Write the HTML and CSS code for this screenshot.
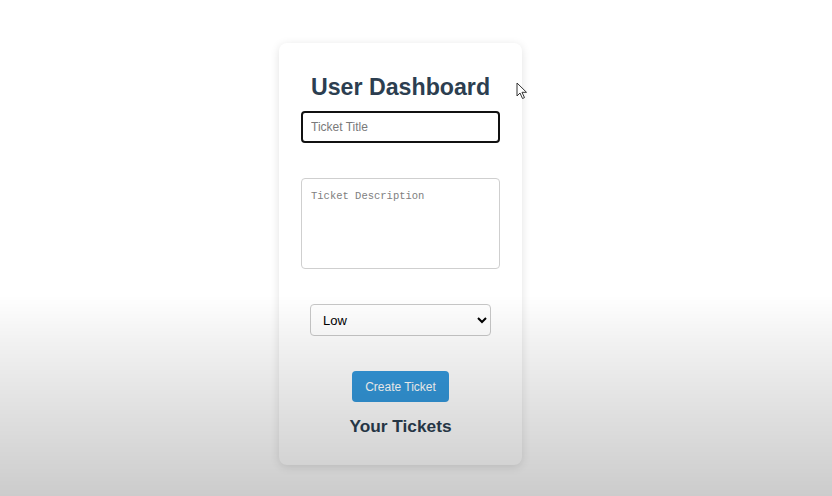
FILE: index.html
```html
<!DOCTYPE html>
<html>
<head>
<meta charset="utf-8">
<link rel="stylesheet" href="styles.css">
</head>
<body>
<div class="page">
  <div class="card">
    <h2 class="title">User Dashboard</h2>
    <input class="field title-input" type="text" placeholder="Ticket Title">
    <textarea class="field desc" placeholder="Ticket Description"></textarea>
    <select class="priority">
      <option>Low</option>
      <option>Medium</option>
      <option>High</option>
    </select>
    <button class="create">Create Ticket</button>
    <h3 class="subtitle">Your Tickets</h3>
  </div>
</div>
<svg class="cursor" width="12" height="18" viewBox="0 0 12 18"><path d="M1 1 L1 14 L4 11 L6.5 16.5 L8.5 15.6 L6 10.3 L10.5 10.3 Z" fill="#fff" stroke="#333" stroke-width="1" stroke-linejoin="round"/></svg>
<div class="shade"></div>
</body>
</html>
```
FILE: styles.css
```css
html, body {
  margin: 0;
  padding: 0;
  height: 100%;
  background: #ffffff;
  font-family: "Liberation Sans", Arial, sans-serif;
}
.page {
  display: flex;
  justify-content: center;
  padding: 43px 31px 0 0;
}
.card {
  width: 243px;
  box-sizing: border-box;
  padding: 30px 22px 28px;
  background: #ffffff;
  border-radius: 8px;
  box-shadow: 0 2px 10px rgba(0, 0, 0, 0.12);
  display: flex;
  flex-direction: column;
  align-items: center;
}
.title {
  margin: 0 0 10px;
  font-size: 23.2px;
  line-height: 28px;
  font-weight: bold;
  color: #2c3e50;
}
.field {
  width: 199px;
  box-sizing: border-box;
  font-family: "Liberation Sans", Arial, sans-serif;
  background: #fff;
  border-radius: 4px;
  outline: none;
}
.title-input {
  height: 32px;
  border: 2px solid #111;
  padding: 0 8px;
  font-size: 12px;
}
.title-input::placeholder { color: #7a7a7a; }
.desc {
  margin-top: 35px;
  height: 91px;
  border: 1px solid #cfcfcf;
  padding: 11px 9px 9px;
  resize: none;
  font-family: "Liberation Mono", monospace;
  font-size: 10.5px;
}
.desc::placeholder { color: #808080; }
.priority {
  margin-top: 35px;
  width: 181px;
  height: 32px;
  border: 1px solid #c8c8c8;
  border-radius: 4px;
  background: #fff;
  padding: 0 8px;
  font-family: "Liberation Sans", Arial, sans-serif;
  font-size: 13px;
  color: #000;
}
.create {
  margin-top: 35px;
  width: 97px;
  height: 31px;
  border: none;
  border-radius: 4px;
  background: #3498db;
  color: #fff;
  font-family: "Liberation Sans", Arial, sans-serif;
  font-size: 12px;
  padding: 0;
}
.subtitle {
  margin: 14px 0 0;
  font-size: 17.3px;
  line-height: 21px;
  font-weight: bold;
  color: #2c3e50;
}
.cursor {
  position: absolute;
  left: 516px;
  top: 82px;
}
.shade {
  position: fixed;
  inset: 0;
  pointer-events: none;
  background: linear-gradient(to bottom, rgba(0,0,0,0) 0px, rgba(0,0,0,0) 295px, rgba(0,0,0,0.05) 340px, rgba(0,0,0,0.13) 420px, rgba(0,0,0,0.2) 496px);
}
```
